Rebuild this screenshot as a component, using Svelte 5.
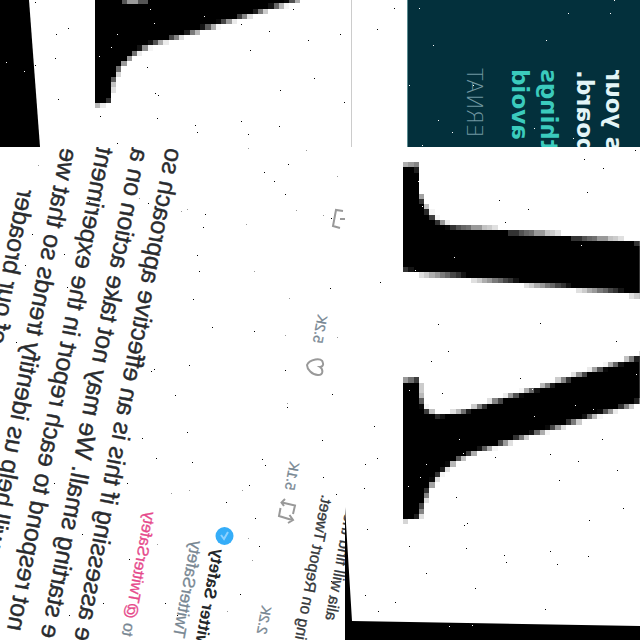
<script>
  const CELL = 5.25;

  function inside(points, x, y) {
    let hit = false;
    for (let i = 0, j = points.length - 1; i < points.length; j = i++) {
      const [xi, yi] = points[i];
      const [xj, yj] = points[j];
      if (yi > y !== yj > y && x < ((xj - xi) * (y - yi)) / (yj - yi) + xi) hit = !hit;
    }
    return hit;
  }

  // Turns an outline into coarse grey cells, shaded by coverage.
  function mosaic(points, x0, y0, x1, y1) {
    const cells = [];
    for (let y = y0; y < y1; y += CELL) {
      let run = null;
      for (let x = x0; x < x1; x += CELL) {
        let n = 0;
        for (let a = 0; a < 5; a++)
          for (let b = 0; b < 5; b++)
            if (inside(points, x + ((a + 0.5) * CELL) / 5, y + ((b + 0.5) * CELL) / 5)) n++;
        if (run && run.n === n) run.w += CELL;
        else {
          run = { x, y, w: CELL, n };
          if (n) cells.push(run);
        }
      }
    }
    return cells;
  }

  const topStroke = mosaic(
    [[95, -6], [95, 105], [110, 102], [112, 84], [120, 67], [133, 54], [150, 45], [200, 30], [300, -1], [300, -6]],
    95, -2, 320, 110
  );
  const upperArm = mosaic(
    [[58, 19], [73, 17], [74, 46], [82, 63], [92, 74], [106, 79], [298, 95], [298, 148], [58, 124]],
    58, 15, 300, 160
  );
  const lowerArm = mosaic(
    [[58, 234], [74, 231], [75, 248], [80, 262], [92, 268], [112, 266], [298, 208], [298, 254], [132, 304], [110, 314], [94, 327], [84, 341], [78, 358], [74, 371], [58, 373]],
    58, 204, 300, 380
  );

  const topSpecks = [[35, 2], [17, 10], [68, 28], [56, 34], [55, 58], [35, 65], [58, 99], [100, 116], [117, 143], [155, 93], [158, 95], [147, 67], [157, 118], [195, 125], [197, 132], [241, 121], [248, 134], [279, 126], [280, 90], [314, 78], [250, 50], [241, 24], [269, 31], [293, 9], [308, 40], [377, 29], [394, 8], [340, 34], [344, 102]];
  const lightSpecks = [[6, 62], [24, 71], [99, 56], [111, 47], [117, 34], [154, 23], [150, 9], [204, 16], [419, 8], [568, 13], [610, 13], [614, 0], [546, 40], [433, 45], [409, 85], [438, 120], [452, 132], [534, 128], [573, 138], [473, 85], [422, 145]];
  const leftSpecks = [[288, 17], [264, 25], [274, 34], [285, 47], [205, 67], [203, 80], [197, 108], [199, 124], [193, 152], [212, 180], [254, 184], [285, 223], [330, 141], [331, 71], [350, 27], [350, 54], [148, 56], [89, 54], [32, 87], [64, 107], [67, 140], [16, 195], [25, 118], [154, 222], [151, 224], [189, 218], [332, 247], [287, 260], [175, 248], [187, 285], [156, 311], [192, 315], [142, 291], [127, 336], [54, 336], [129, 412], [82, 387], [103, 456], [165, 456], [69, 468], [177, 468], [262, 312], [265, 318], [249, 338], [226, 355], [255, 371], [259, 399], [323, 330], [322, 293], [336, 347], [240, 447], [331, 434]];
  const faintSpecks = [[248, 1], [306, 3], [337, 29], [296, 63], [323, 68], [246, 77], [254, 124], [289, 151], [285, 188], [337, 190], [38, 18], [139, 51], [181, 64], [187, 62], [171, 346], [189, 343], [287, 256], [242, 343], [248, 391], [252, 413], [227, 464], [157, 397]];
  const rightSpecks = [[290, 3], [239, 12], [258, 21], [242, 45], [154, 53], [183, 62], [160, 75], [35, 135], [93, 177], [195, 176], [271, 194], [103, 204], [86, 214], [175, 231], [97, 246], [29, 279], [32, 311], [20, 317], [19, 341], [150, 310], [205, 307], [233, 314], [257, 292], [272, 323], [214, 333], [278, 361], [111, 350], [122, 376], [119, 378], [244, 373], [22, 382], [64, 399], [121, 401], [159, 408], [161, 415], [205, 404], [243, 409], [212, 417], [81, 426], [130, 441], [20, 448], [50, 455], [33, 464], [200, 462]];
  const rightLight = [[73, 34], [77, 59], [109, 110], [236, 98], [70, 123], [187, 242], [64, 243], [114, 292], [189, 269], [230, 258], [248, 262], [118, 306], [81, 317], [75, 330], [63, 339], [291, 227], [104, 479], [127, 478]];
</script>

{#snippet specks(list, fill)}
  {#each list as [x, y]}
    <rect {x} {y} width="1" height="1" {fill} />
  {/each}
{/snippet}

{#snippet stroke(cells)}
  {#each cells as c}
    <rect x={c.x} y={c.y} width={c.w} height={CELL} fill="#000" fill-opacity={c.n / 25} />
  {/each}
{/snippet}

<main class="collage">
  <section class="banner">
    <svg viewBox="0 0 640 147">
      <path d="M0 0H29L40 147H0Z" />
      <g shape-rendering="crispEdges">{@render stroke(topStroke)}</g>
      <path d="M122 0H148V4H122Z" fill="#555" />
      <path d="M127 0H138V4H127Z" fill="#999" />
      <path d="M351.500 0V147" stroke="#ccc" />
      <path d="M408 0H640V147H408Z" fill="#03303c" />
      <path d="M407.500 0V147" stroke="#5c8c91" />
      <g class="poster">
        <text class="label" text-anchor="end" transform="matrix(0 -1 -1 0 467 68)">ERNAT</text>
        <g class="mint">
          <text text-anchor="end" transform="matrix(0 -1 -1 0 512 69)">avoid</text>
          <text text-anchor="end" transform="matrix(0 -1 -1 0 541 69)">things</text>
        </g>
        <g class="pale">
          <text text-anchor="end" transform="matrix(0 -1 -1 0 577 70)">board.</text>
          <text text-anchor="end" transform="matrix(0 -1 -1 0 606 70)">s your</text>
        </g>
      </g>
      {@render specks(topSpecks, '#000')}
      {@render specks(lightSpecks, '#fff')}
    </svg>
  </section>

  <section>
    <svg viewBox="0 0 345 493">
      <g class="tweet">
        <text text-anchor="end" transform="matrix(.183 -.983 -.983 -.183 166 0)">e assessing if this is an effective approach so</text>
        <text text-anchor="end" transform="matrix(.183 -.983 -.983 -.183 132 0)">e starting small. We may not take action on a</text>
        <text text-anchor="end" transform="matrix(.183 -.983 -.983 -.183 97 -1)">not respond to each report in the experiment</text>
        <text text-anchor="end" transform="matrix(.183 -.983 -.983 -.183 61 0)">will help us identify trends so that we</text>
        <text text-anchor="end" transform="matrix(.183 -.983 -.983 -.183 18 41)">of our broader</text>
      </g>
      <g class="meta">
        <text text-anchor="end" transform="matrix(.183 -.983 -.983 -.183 145 364)">to <tspan class="mention">@TwitterSafety</tspan></text>
        <text class="handle" text-anchor="end" transform="matrix(.183 -.983 -.983 -.183 191 393)">TwitterSafety</text>
        <text class="name" text-anchor="end" transform="matrix(.183 -.983 -.983 -.183 213 401)">witter Safety</text>
        <text class="count" text-anchor="end" transform="matrix(.183 -.983 -.983 -.183 318 167)">5.2K</text>
        <text class="count" text-anchor="end" transform="matrix(.183 -.983 -.983 -.183 290 314)">5.1K</text>
        <text class="count" text-anchor="end" transform="matrix(.183 -.983 -.983 -.183 262 458)">2.2K</text>
        <text class="quote" text-anchor="end" transform="matrix(.183 -.983 -.983 -.183 322 347)">ing on Report Tweet.</text>
        <text class="quote" text-anchor="end" transform="matrix(.183 -.983 -.983 -.183 345 366)">alia will find the</text>
      </g>
      <circle cx="224.500" cy="389" r="9" fill="#35adf8" />
      <path d="M221 388L224 392L228 385" class="icon tick" />
      <path d="M343 64L336 63L333 79L340 81M340 72H345" class="icon" />
      <path d="M307 218C309 213 322 209 323 216C324 219 321 220 320 220C323 222 324 228 318 228C312 228 307 222 307 218Z" class="icon" />
      <path d="M280.500 361L279 369L292 373M289.500 368L293 373L288 376M282 355.500L295 358.500L293 367M285 352L281.500 355.500L284 359" class="icon" />
      {@render specks(leftSpecks, '#000')}
      {@render specks(faintSpecks, '#999')}
    </svg>
  </section>

  <section>
    <svg viewBox="0 0 295 493">
      <path d="M0 360L7 474L295 479V493H0Z" />
      <g shape-rendering="crispEdges">
        {@render stroke(upperArm)}
        {@render stroke(lowerArm)}
      </g>
      {@render specks(rightSpecks, '#000')}
      {@render specks(rightLight, '#fff')}
    </svg>
  </section>
</main>

<style>
  :global(body) {
    margin: 0;
    background: #fff;
  }
  .collage {
    display: grid;
    grid-template-columns: 345fr 295fr;
    overflow: hidden;
    background: #fff;
    font-family: 'Liberation Sans', Arial, sans-serif;
  }
  .banner {
    grid-column: 1 / -1;
  }
  svg {
    display: block;
    width: 100%;
    overflow: hidden;
  }
  .tweet {
    font-size: 25px;
    fill: #292b2e;
    stroke: #292b2e;
    stroke-width: 0.4;
  }
  .poster {
    font-family: 'DejaVu Sans', sans-serif;
    font-size: 23px;
    font-weight: 700;
  }
  .label {
    font-size: 21px;
    font-weight: 200;
    fill: #7197a1;
  }
  .mint {
    fill: #3bcbbd;
  }
  .pale {
    fill: #e3f5f7;
  }
  .meta {
    font-size: 16px;
    fill: #788793;
    stroke: #788793;
    stroke-width: 0.3;
  }
  .mention {
    fill: #e6498b;
    stroke: #e6498b;
  }
  .handle {
    font-size: 17px;
  }
  .name {
    font-size: 17px;
    font-weight: 700;
    fill: #24272a;
    stroke: none;
  }
  .count {
    font-size: 14px;
  }
  .quote {
    fill: #34373a;
    stroke: #34373a;
  }
  .icon {
    fill: none;
    stroke: #999;
    stroke-width: 2;
  }
  .tick {
    stroke: #8fd2ff;
  }
</style>
